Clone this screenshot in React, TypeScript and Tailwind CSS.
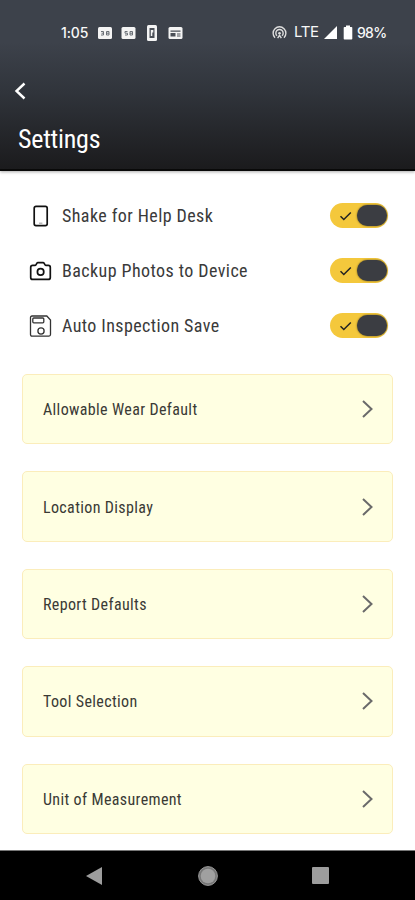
import type { ReactNode } from "react";

const options: { label: string; className: string; icon: ReactNode }[] = [
  {
    label: "Shake for Help Desk",
    className: "tracking-[0.42px]",
    icon: (
      <svg viewBox="0 0 24 24" className="size-6" fill="none" stroke="#111" strokeWidth="1.7">
        <rect x="6.2" y="2.4" width="13" height="19.2" rx="1.8" />
        <path d="M11 19.200h3.400" stroke="#aaa" strokeWidth="1.2" />
      </svg>
    ),
  },
  {
    label: "Backup Photos to Device",
    className: "tracking-[0.42px]",
    icon: (
      <svg viewBox="0 0 24 24" className="size-6" fill="none" stroke="#111" strokeWidth="1.7">
        <path d="M4.700 6.400h2.200c.6 0 .9-.3 1.200-.8l.7-1.200c.3-.5.6-.7 1.200-.7h5c.6 0 .9.2 1.200.7l.7 1.200c.3.5.6.8 1.200.8h2.200c1.200 0 2 .8 2 2v10c0 1.200-.8 2-2 2H4.700c-1.200 0-2-.8-2-2v-10c0-1.200.8-2 2-2z" />
        <circle cx="12.600" cy="12.900" r="3.200" />
      </svg>
    ),
  },
  {
    label: "Auto Inspection Save",
    className: "tracking-[0.4px]",
    icon: (
      <svg viewBox="0 0 24 24" className="size-6" fill="none" stroke="#333" strokeWidth="1.3">
        <path d="M4 2h14.800l3.700 4v14.600c0 .9-.6 1.500-1.500 1.500H4c-.9 0-1.500-.6-1.500-1.500V3.500C2.500 2.600 3.100 2 4 2z" />
        <rect x="4.800" y="4" width="11" height="4.800" rx="1" />
        <circle cx="13" cy="17" r="3.100" />
      </svg>
    ),
  },
];

const sections = [
  "Allowable Wear Default",
  "Location Display",
  "Report Defaults",
  "Tool Selection",
  "Unit of Measurement",
];

function StatusBar() {
  return (
    <div className="flex h-[65px] items-center pl-[61px] pr-[29px] font-[Inter,sans-serif] text-[14px] font-medium text-[#f8f8f8]">
      <span className="w-[37px] tracking-[-0.1px]">1:05</span>
      <svg viewBox="0 0 86 18" className="h-[18px] w-[86px]" fill="#f4f4f4">
        <rect x="0" y="3" width="14" height="12" rx="1.500" />
        <rect x="23.500" y="3" width="14" height="12" rx="1.500" />
        <rect x="49" y="1" width="10" height="16" rx="1.500" />
        <rect x="70.500" y="3" width="14" height="12" rx="1.500" />
        <g fill="none" stroke="#6b7077" strokeWidth="1">
          <path d="M3 7.500h2.500v3.500H3M3.500 9.200h2M8.500 7.500H11v3.500H8.500zM8.500 9.200H11" />
          <path d="M29.500 7.500H27v1.700h2.500V11H27M32 7.500h2.500v3.500H32zM32 9.200h2.500" />
        </g>
        <path d="M51.500 4h5v10h-5z" fill="#4a4f57" />
        <path d="M52.800 6h2.500v2.500h-1v3.500h-1.500z" />
        <path d="M72.500 6.500h10v1.300h-10zM72.500 9h5v3.500h-5zM79 9.500h3.500v1H79zM79 11.500h3.500v1H79z" fill="#4a4f57" />
      </svg>
      <svg viewBox="0 0 16 16" className="ml-auto size-[15px]" fill="none" stroke="#ddd" strokeWidth="1.500">
        <path d="M3.200 13.500a6.800 6.800 0 1 1 9.600 0M5.300 11.500a3.900 3.900 0 1 1 5.400 0" />
        <circle cx="8" cy="8.800" r="1.400" fill="#ddd" stroke="none" />
        <path d="M6 14l2-3 2 3" />
      </svg>
      <span className="ml-[7px] w-[30px] text-[15px] font-normal tracking-[-0.4px]">LTE</span>
      <svg viewBox="0 0 30 16" className="h-4 w-[30px]" fill="#fff">
        <path d="M13 1v13H0z" />
        <path d="M22 .5h4V2h1.500q.8 0 .8.8v11q0 .8-.8.8h-7q-.8 0-.8-.8v-11q0-.8.8-.8H22z" />
      </svg>
      <span className="ml-[3px] w-[29px] tracking-[-0.7px]">98%</span>
    </div>
  );
}

function Toggle() {
  return (
    <div className="flex h-[25px] w-[58px] items-center justify-between rounded-full bg-[#f4c83c] pl-[9px] pr-px">
      <svg viewBox="0 0 14 12" className="h-3 w-[14px]" fill="none" stroke="#222" strokeWidth="1.500">
        <path d="M1.500 6.200l3.300 3.300 7-7" />
      </svg>
      <span className="h-[21px] w-[30px] rounded-full bg-[#3b3d42] shadow-[0_0_2px_#54481d]" />
    </div>
  );
}

export default function App() {
  return (
    <div className="flex h-[900px] w-[415px] flex-col overflow-hidden bg-white font-[Roboto,sans-serif]">
      <header className="h-[171px] shrink-0 border-b-2 border-[#090909] bg-linear-to-b from-[#3d424b] from-25% via-[#30343b] via-55% to-[#1b1b1d] shadow-[0_1px_3px_#aaa]">
        <StatusBar />
        <svg viewBox="0 0 12 18" className="ml-[14px] mt-[17px] h-[18px] w-3" fill="none" stroke="#fff" strokeWidth="2.400">
          <path d="M10.500 1.500L2.500 9l8 7.500" />
        </svg>
        <h1 className="ml-[18px] mt-[23px] text-[26px] leading-8 tracking-[-0.25px] text-white font-stretch-condensed">Settings</h1>
      </header>

      <main className="flex-1 px-[22px] pt-[17px]">
        {options.map(({ label, className, icon }) => (
          <div key={label} className="flex h-[55px] items-center pl-[6px] pr-[5px]">
            {icon}
            <span className={`ml-[10px] flex-1 text-[18px] text-[#3a3a3a] font-stretch-condensed ${className}`}>{label}</span>
            <Toggle />
          </div>
        ))}
        <div className="mt-[21px] flex flex-col gap-[27px]">
          {sections.map((label) => (
            <div
              key={label}
              className="flex h-[70.400px] items-center justify-between rounded-[5px] border border-[#fbedbb] bg-[#ffffe2] pl-5 pr-[19px]"
            >
              <span className="pt-[2px] text-[16px] tracking-[0.36px] text-[#3a3a35] font-stretch-condensed">{label}</span>
              <svg viewBox="0 0 12 20" className="h-5 w-3" fill="none" stroke="#6a6a6a" strokeWidth="2">
                <path d="M2 2l8.500 8L2 18" />
              </svg>
            </div>
          ))}
        </div>
      </main>

      <nav className="flex h-[50px] shrink-0 items-center border-t border-[#777] bg-black">
        <svg viewBox="0 0 17 18" className="ml-[86px] h-[18px] w-[17px]" fill="#9d9d9d">
          <path d="M16 0v18L0 9z" />
        </svg>
        <svg viewBox="0 0 20 20" className="ml-[95px] size-5">
          <circle cx="10" cy="10" r="9.400" fill="#777" stroke="#999" />
          <circle cx="10" cy="10" r="7.300" fill="#a0a0a0" />
        </svg>
        <span className="ml-[94px] size-[17px] rounded-[1px] bg-[#9d9d9d]" />
      </nav>
    </div>
  );
}
